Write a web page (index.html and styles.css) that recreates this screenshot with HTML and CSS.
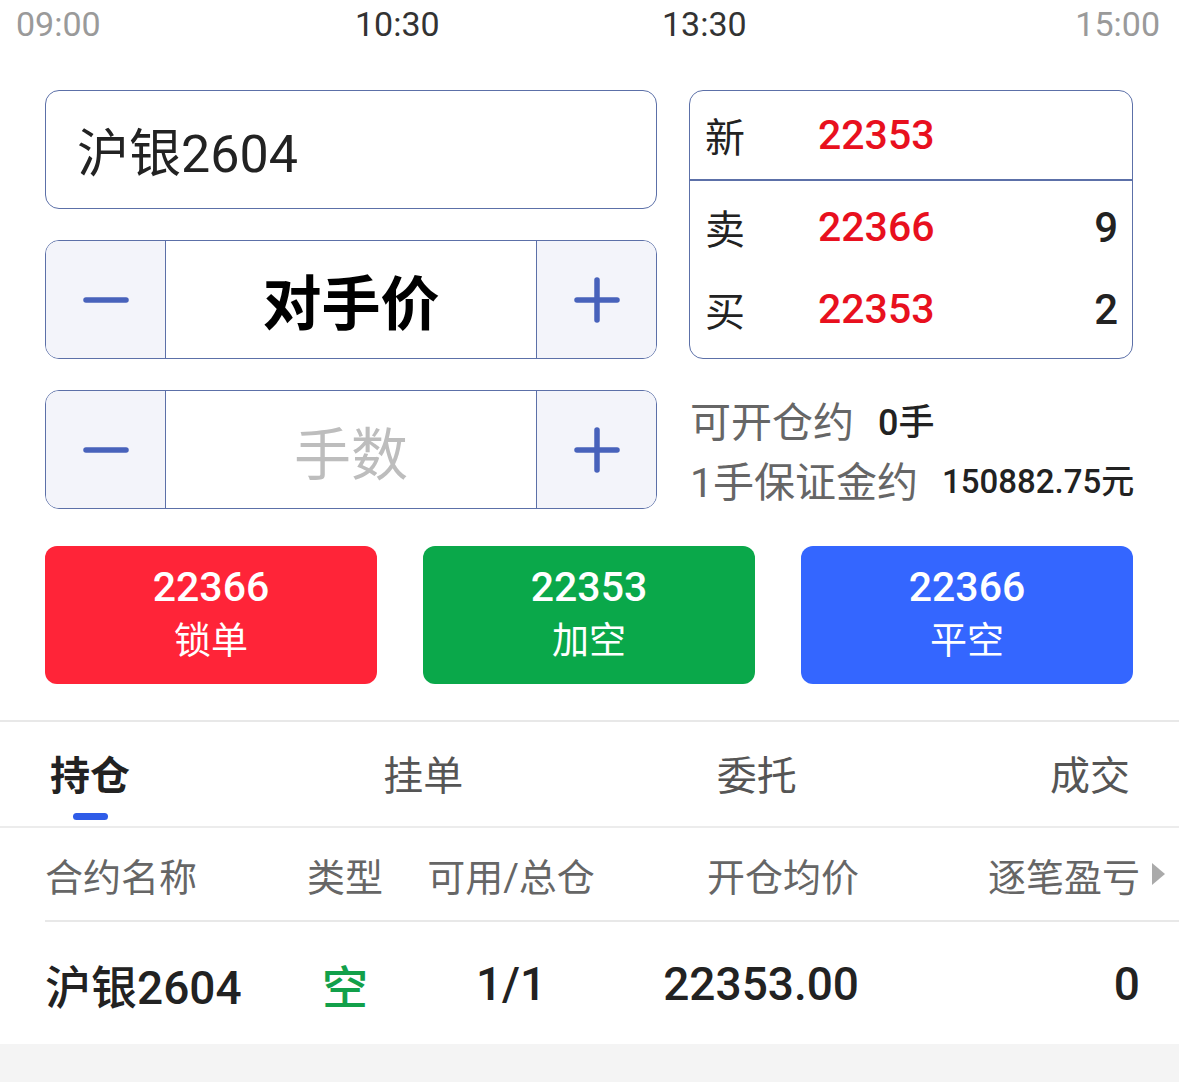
FILE: index.html
```html
<!DOCTYPE html>
<html lang="zh-CN">
<head>
  <meta charset="UTF-8">
  <meta name="viewport" content="width=device-width, initial-scale=1.0">
  <title>下单 - 沪银2604</title>
  <link rel="stylesheet" href="styles.css">
</head>
<body>
  <div class="times">
    <span>09:00</span>
    <span class="active">10:30</span>
    <span class="active">13:30</span>
    <span>15:00</span>
  </div>

  <div class="order">
    <div class="order-left">
      <div class="contract">沪银2604</div>

      <div class="stepper">
        <button class="step-btn minus" type="button">
          <svg width="46" height="46" viewBox="0 0 46 46"><line x1="3" y1="23" x2="43" y2="23" /></svg>
        </button>
        <div class="step-value">对手价</div>
        <button class="step-btn plus" type="button">
          <svg width="46" height="46" viewBox="0 0 46 46"><line x1="3" y1="23" x2="43" y2="23" /><line x1="23" y1="3" x2="23" y2="43" /></svg>
        </button>
      </div>

      <div class="stepper">
        <button class="step-btn minus" type="button">
          <svg width="46" height="46" viewBox="0 0 46 46"><line x1="3" y1="23" x2="43" y2="23" /></svg>
        </button>
        <div class="step-value placeholder">手数</div>
        <button class="step-btn plus" type="button">
          <svg width="46" height="46" viewBox="0 0 46 46"><line x1="3" y1="23" x2="43" y2="23" /><line x1="23" y1="3" x2="23" y2="43" /></svg>
        </button>
      </div>
    </div>

    <div class="order-right">
      <div class="quote">
        <div class="quote-row quote-last">
          <span class="quote-label">新</span>
          <span class="quote-price">22353</span>
          <span class="quote-vol"></span>
        </div>
        <div class="quote-book">
          <div class="quote-row">
            <span class="quote-label">卖</span>
            <span class="quote-price">22366</span>
            <span class="quote-vol">9</span>
          </div>
          <div class="quote-row">
            <span class="quote-label">买</span>
            <span class="quote-price">22353</span>
            <span class="quote-vol">2</span>
          </div>
        </div>
      </div>

      <div class="info">
        <p class="info-line">可开仓约<span class="info-value">0手</span></p>
        <p class="info-line">1手保证金约<span class="info-value small">150882.75元</span></p>
      </div>
    </div>
  </div>

  <div class="actions">
    <button class="action red" type="button"><span class="action-price">22366</span><span class="action-name">锁单</span></button>
    <button class="action green" type="button"><span class="action-price">22353</span><span class="action-name">加空</span></button>
    <button class="action blue" type="button"><span class="action-price">22366</span><span class="action-name">平空</span></button>
  </div>

  <nav class="tabs">
    <a class="tab active">持仓</a>
    <a class="tab">挂单</a>
    <a class="tab">委托</a>
    <a class="tab">成交</a>
  </nav>

  <div class="positions">
    <div class="pos-row pos-head">
      <span>合约名称</span>
      <span class="c">类型</span>
      <span class="c">可用/总仓</span>
      <span class="r">开仓均价</span>
      <span class="r">逐笔盈亏</span>
      <span class="more"><svg width="13" height="22" viewBox="0 0 13 22"><polygon points="0,0 13,11 0,22" /></svg></span>
    </div>
    <div class="pos-row pos-item">
      <span>沪银2604</span>
      <span class="c short">空</span>
      <span class="c">1/1</span>
      <span class="r">22353.00</span>
      <span class="r">0</span>
      <span></span>
    </div>
  </div>

  <div class="bottom-fill"></div>
</body>
</html>
```

FILE: styles.css
```css
/* Base */
* {
  margin: 0;
  padding: 0;
  box-sizing: border-box;
}

body {
  font-family: Roboto, "Noto Sans CJK SC", sans-serif;
  color: #222;
  background: #fff;
  height: 100vh;
  display: flex;
  flex-direction: column;
  overflow: hidden;
}

button {
  font-family: inherit;
  border: none;
  cursor: pointer;
}

/* Session time axis */
.times {
  display: grid;
  grid-template-columns: 339px 307px 1fr auto;
  padding: 0 19px 0 16px;
  height: 50px;
  line-height: 48px;
  font-size: 34px;
  color: #9a9a9a;
}

.times .active {
  color: #333;
}

/* Order form */
.order {
  display: flex;
  gap: 32px;
  padding: 0 46px 0 45px;
  margin-top: 40px;
}

.order-left {
  width: 612px;
  display: flex;
  flex-direction: column;
  gap: 31px;
}

.contract {
  height: 119px;
  border: 1.5px solid #5c70a8;
  border-radius: 14px;
  padding-left: 31px;
  display: flex;
  align-items: center;
  font-size: 52px;
  color: #222;
}

.stepper {
  height: 119px;
  border: 1.5px solid #5c70a8;
  border-radius: 14px;
  display: flex;
  overflow: hidden;
}

.step-btn {
  width: 120px;
  background: #f3f4fa;
  display: flex;
  align-items: center;
  justify-content: center;
}

.step-btn.minus {
  border-right: 1.5px solid #5c70a8;
}

.step-btn.plus {
  border-left: 1.5px solid #5c70a8;
}

.step-btn svg line {
  stroke: #4862bb;
  stroke-width: 5.5;
  stroke-linecap: round;
}

.step-value {
  flex: 1;
  display: flex;
  align-items: center;
  justify-content: center;
  font-size: 59px;
  font-weight: 700;
  color: #000;
}

.step-value.placeholder {
  font-size: 57px;
  font-weight: 400;
  color: #bdbdbd;
}

/* Quote box */
.order-right {
  width: 444px;
}

.quote {
  height: 269px;
  border: 1.5px solid #5c70a8;
  border-radius: 14px;
  overflow: hidden;
}

.quote-row {
  display: grid;
  grid-template-columns: 113px 1fr auto;
  align-items: center;
  height: 82px;
  padding: 0 14px 0 15px;
}

.quote-last {
  height: 90px;
  border-bottom: 2px solid #5c70a8;
}

.quote-book {
  padding: 5px 0;
}

.quote-label {
  font-size: 40px;
  color: #222;
}

.quote-price {
  font-size: 41px;
  font-weight: 500;
  color: #e8101e;
}

.quote-vol {
  font-size: 42px;
  font-weight: 500;
  color: #222;
}

.info {
  margin-top: 30px;
  padding-left: 1px;
}

.info-line {
  height: 60px;
  display: flex;
  align-items: center;
  font-size: 41px;
  color: #666;
  white-space: nowrap;
}

.info-value {
  margin-left: 24px;
  font-size: 36px;
  font-weight: 500;
  color: #222;
}

.info-value.small {
  margin-left: 24px;
  font-size: 33px;
}

/* Action buttons */
.actions {
  display: flex;
  gap: 46px;
  padding: 0 46px 0 45px;
  margin: 37px 0 36px;
}

.action {
  flex: 1;
  height: 138px;
  border-radius: 12px;
  color: #fff;
  display: flex;
  flex-direction: column;
  align-items: center;
  justify-content: center;
}

.action-price {
  font-size: 41px;
  font-weight: 500;
  line-height: 54px;
}

.action-name {
  font-size: 37px;
  line-height: 56px;
}

.action.red {
  background: #ff2438;
}

.action.green {
  background: #0aa84a;
}

.action.blue {
  background: #3466ff;
}

/* Tabs */
.tabs {
  display: flex;
  justify-content: space-between;
  align-items: flex-start;
  padding: 27px 49px 6px 50px;
  border-top: 2px solid #e8e8e8;
  border-bottom: 2px solid #ececec;
}

.tab {
  display: flex;
  flex-direction: column;
  align-items: center;
  font-size: 40px;
  line-height: 56px;
  color: #555;
}

.tab.active {
  font-weight: 700;
  color: #222;
}

.tab.active::after {
  content: "";
  width: 35px;
  height: 7px;
  border-radius: 4px;
  background: #2f5ce8;
  margin-top: 8px;
}

.tab:not(.active) {
  padding-bottom: 15px;
}

/* Positions table */
.positions {
  margin-left: 45px;
}

.pos-row {
  display: grid;
  grid-template-columns: 240px 120px 212px 242px 281px 1fr;
  align-items: center;
  white-space: nowrap;
}

.pos-row .c {
  justify-self: center;
}

.pos-row .r {
  justify-self: end;
}

.pos-head {
  height: 94px;
  border-bottom: 2px solid #e8e8e8;
  font-size: 38px;
  color: #666;
}

.pos-head .more {
  padding-left: 12px;
  display: flex;
  align-items: center;
}

.pos-head .more polygon {
  fill: #aaa;
}

.pos-item {
  height: 122px;
  padding-top: 2px;
  font-size: 46px;
  font-weight: 500;
  color: #222;
}

.pos-item .short {
  color: #12a04a;
}

.bottom-fill {
  flex: 1;
  background: #f4f4f4;
}
```
